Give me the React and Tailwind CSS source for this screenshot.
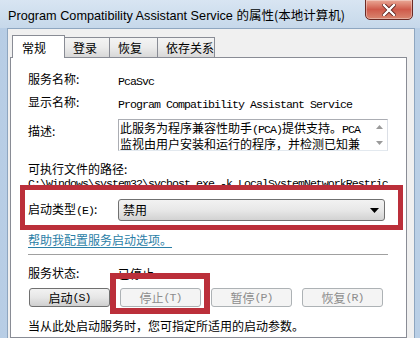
import React from 'react';

const cjk = "font-['Noto_Sans_CJK_SC',sans-serif] text-[12px] leading-[14px]";
const mono = "font-['Liberation_Mono',monospace] text-[11.6px] tracking-[-0.96px]";

// half-width ascii bits inside chinese text, SimSun style
const A = ({ children }) => <span className={mono}>{children}</span>;

const TABS = [
  { name: '常规', w: 'w-[53px]', active: true },
  { name: '登录', w: 'w-[46px]' },
  { name: '恢复', w: 'w-[49px]' },
  { name: '依存关系', w: 'w-[58px]' },
];

function Row({ label, children, className = '' }) {
  return (
    <div className={`flex items-center ${className}`}>
      <div className={`w-[90px] shrink-0 ${cjk} text-black`}>{label}</div>
      <div className="flex-1 min-w-0">{children}</div>
    </div>
  );
}

function WinButton({ label, hot, disabled }) {
  return (
    <div
      className={`w-[81px] h-[19px] rounded-[3px] border flex items-center justify-center ${cjk} ${
        disabled
          ? 'border-[#adb2b5] bg-[#f4f4f4] text-[#8d8d8d]'
          : 'border-[#707070] bg-gradient-to-b from-[#f2f2f2] via-[#e6e6e6] to-[#cfcfcf] text-black'
      }`}
    >
      {label}
      <A>({hot})</A>
    </div>
  );
}

export default function App() {
  return (
    <div className="relative w-[420px] h-[338px] overflow-hidden flex flex-col bg-gradient-to-r from-[#b7cde5] via-[#cfdeee] to-[#b9cfe6]">
      {/* title bar */}
      <div className="h-[28px] shrink-0 flex items-start pl-[8px] pt-[7px] bg-gradient-to-b from-[#d8e5f2] to-[#c6d8ea]">
        <span className="font-['Liberation_Sans',sans-serif] text-[12.7px] leading-[16px] text-black whitespace-nowrap">
          Program Compatibility Assistant Service{' '}
          <span className="font-['Noto_Sans_CJK_SC',sans-serif] text-[12.5px]">的属性(本地计算机)</span>
        </span>
      </div>

      {/* close button */}
      <div className="absolute left-[365px] top-[-1px] w-[48px] h-[21px] rounded-b-[5px] border border-[#6b2a24] bg-gradient-to-b from-[#e9a897] via-[#cf5a4b] to-[#d98670] flex items-center justify-center shadow-[inset_0_0_0_1px_rgba(255,255,255,0.35)]">
        <svg width="14" height="12" viewBox="0 0 14 12">
          <path d="M2 1 L12 11 M12 1 L2 11" stroke="#5a1f1a" strokeWidth="4" strokeLinecap="square" />
          <path d="M2 1 L12 11 M12 1 L2 11" stroke="#ffffff" strokeWidth="2.4" strokeLinecap="square" />
        </svg>
      </div>

      <div className="flex-1 flex pl-[7px] pr-[7px] min-h-0">
        <div className="flex-1 flex flex-col bg-[#f0f0f0] border-l border-r border-t border-[#8ea6c0] pl-[2px] pr-[7px] pt-[5px] min-h-0">
          {/* tabs */}
          <div className="h-[23px] shrink-0 flex items-end pl-[2px]">
            {TABS.map((t) =>
              t.active ? (
                <div
                  key={t.name}
                  className={`${t.w} h-[23px] -mb-px relative z-10 bg-white border border-b-0 border-[#898c95] ${cjk} text-[12.5px] text-black pl-[9px] pt-[5px]`}
                >
                  {t.name}
                </div>
              ) : (
                <div
                  key={t.name}
                  className={`${t.w} h-[20px] -ml-px border border-b-0 border-[#898c95] bg-gradient-to-b from-[#f4f4f4] via-[#ebebeb] to-[#d8d8d8] ${cjk} text-[12.5px] text-black pl-[8px] pt-[3px]`}
                >
                  {t.name}
                </div>
              )
            )}
          </div>

          {/* tab panel */}
          <div className="flex-1 bg-white border border-[#898c95] pl-[17px] pr-[18px] flex flex-col min-h-0">
            <Row label="服务名称:" className="mt-[12px] h-[18px]">
              <span className={`${mono} text-black`}>PcaSvc</span>
            </Row>
            <Row label="显示名称:" className="mt-[5px] h-[18px]">
              <span className={`${mono} text-black whitespace-nowrap`}>Program Compatibility Assistant Service</span>
            </Row>

            <div className="mt-[8px] h-[32px] flex items-start">
              <div className={`w-[90px] shrink-0 ${cjk} text-black pt-[5px]`}>描述:</div>
              <div className="w-[270px] h-[32px] border border-[#abadb3] border-r-[#dbdfe6] border-b-[#e3e9ef] bg-white flex">
                <div className={`flex-1 ${cjk} text-black pl-[1px] pt-[1px] whitespace-nowrap`}>
                  <div>
                    此服务为程序兼容性助手<A>(PCA)</A>提供支持。<A>PCA</A>
                  </div>
                  <div>监视由用户安装和运行的程序，并检测已知兼</div>
                </div>
                <div className="w-[16px] flex flex-col items-center justify-between py-[5px]">
                  <svg width="7" height="4" viewBox="0 0 7 4">
                    <path d="M0 4 L3.5 0 L7 4 Z" fill="#9a9a9a" />
                  </svg>
                  <svg width="7" height="4" viewBox="0 0 7 4">
                    <path d="M0 0 L3.5 4 L7 0 Z" fill="#9a9a9a" />
                  </svg>
                </div>
              </div>
            </div>

            <div className={`mt-[10px] h-[16px] flex items-center ${cjk} text-black`}>可执行文件的路径:</div>
            <div className={`h-[14px] flex items-center ${mono} text-black whitespace-nowrap overflow-hidden`}>
              C:\Windows\system32\svchost.exe -k LocalSystemNetworkRestric
            </div>

            <Row label={<>启动类型<A>(E)</A>:</>} className="mt-[8px] h-[22px]">
              <div className="w-[267px] h-[22px] rounded-[3px] border border-[#707070] bg-gradient-to-b from-[#f2f2f2] via-[#e8e8e8] to-[#d2d2d2] flex items-center pl-[4px] pr-[5px]">
                <span className={`flex-1 ${cjk} text-black`}>禁用</span>
                <svg width="9" height="5" viewBox="0 0 9 5">
                  <path d="M0 0 L9 0 L4.5 5 Z" fill="#000000" />
                </svg>
              </div>
            </Row>

            <div className={`mt-[11px] h-[16px] flex items-center ${cjk} text-[#2a7ea6] underline underline-offset-2`}>
              帮助我配置服务启动选项。
            </div>

            <div className="mt-[6px] h-px bg-[#a0a0a0] shrink-0" />

            <Row label="服务状态:" className="mt-[10px] h-[16px]">
              <span className={`${cjk} text-black`}>已停止</span>
            </Row>

            <div className="mt-[7px] flex gap-[10px] pl-[1px]">
              <WinButton label="启动" hot="S" />
              <WinButton label="停止" hot="T" disabled />
              <WinButton label="暂停" hot="P" disabled />
              <WinButton label="恢复" hot="R" disabled />
            </div>

            <div className={`mt-[11px] h-[16px] flex items-center ${cjk} text-black whitespace-nowrap`}>
              当从此处启动服务时，您可指定所适用的启动参数。
            </div>
          </div>
        </div>
      </div>

      {/* red annotation boxes */}
      <div className="absolute left-[20px] top-[185px] w-[383px] h-[45px] border-[5px] border-[#bb2f3a]" />
      <div className="absolute left-[110px] top-[273px] w-[100px] h-[41px] border-[6px] border-[#bb2f3a]" />
    </div>
  );
}
